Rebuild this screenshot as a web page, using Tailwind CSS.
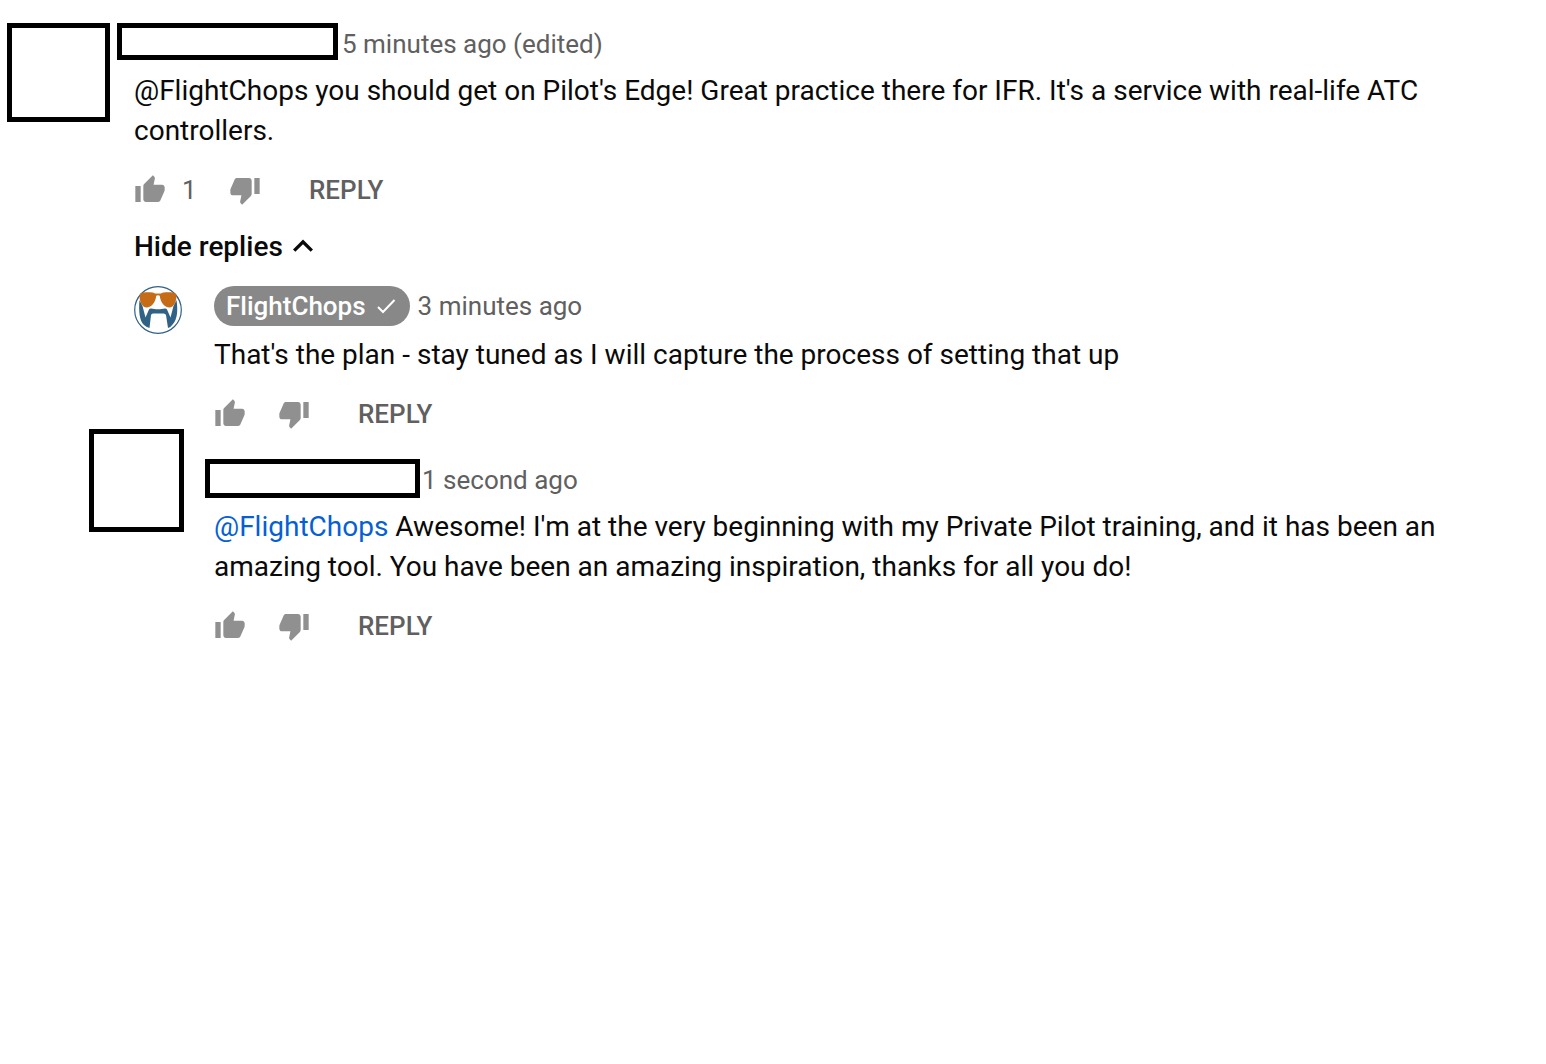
<!DOCTYPE html>
<html lang="en">
<head>
    <meta charset="UTF-8">
    <meta name="viewport" content="width=device-width, initial-scale=1.0">
    <title>Comments</title>
    <script src="https://cdn.jsdelivr.net/npm/@tailwindcss/browser@4"></script>
</head>
<body class="bg-white min-h-screen font-[Roboto,sans-serif] text-[#0a0a0a]">

    <!-- Shared icons -->
    <svg class="hidden" aria-hidden="true">
        <symbol id="icon-like" viewBox="0 0 24 24">
            <path d="M1 21h4V9H1v12zm22-11c0-1.1-.9-2-2-2h-6.31l.95-4.57.03-.32c0-.41-.17-.79-.44-1.06L14.17 1 7.59 7.59C7.22 7.95 7 8.45 7 9v10c0 1.1.9 2 2 2h9c.83 0 1.54-.5 1.84-1.22l3.02-7.05c.09-.23.14-.47.14-.73v-1.91l-.01-.01L23 10z"/>
        </symbol>
        <symbol id="icon-dislike" viewBox="0 0 24 24">
            <path d="M15 3H6c-.83 0-1.54.5-1.84 1.22l-3.02 7.05c-.09.23-.14.47-.14.73v1.91l.01.01L1 14c0 1.1.9 2 2 2h6.31l-.95 4.57-.03.32c0 .41.17.79.44 1.06L9.83 23l6.59-6.59c.36-.36.58-.86.58-1.41V5c0-1.1-.9-2-2-2zm4 0v12h4V3h-4z"/>
        </symbol>
    </svg>

    <main class="pt-[23px] pl-[7px] pr-16">
        <article class="flex items-start gap-[7px]">
            <div class="w-[103px] h-[99px] shrink-0 border-5 border-black"></div>
            <div class="min-w-0 flex-1">
                <header class="flex items-center gap-1 h-[41px]">
                    <div class="w-[221px] h-[37px] shrink-0 self-start border-5 border-black"></div>
                    <a href="#" class="text-[26px] leading-9 text-[#606060]">5 minutes ago (edited)</a>
                </header>

                <div class="pl-[17px] pt-[7px]">
                    <p class="text-[28px] leading-10">@FlightChops you should get on Pilot's Edge! Great practice there for IFR. It's a service with real-life ATC controllers.</p>

                    <div class="mt-[23px] flex items-center h-8 text-[26px] text-[#606060]">
                        <button type="button" aria-label="Like"><svg class="size-8 fill-[#909090]"><use href="#icon-like"/></svg></button>
                        <span class="ml-4 w-[15px]">1</span>
                        <button type="button" aria-label="Dislike" class="ml-8"><svg class="size-8 fill-[#909090]"><use href="#icon-dislike"/></svg></button>
                        <button type="button" class="ml-12 font-medium">REPLY</button>
                    </div>

                    <button type="button" class="mt-[21px] flex items-center h-10 text-[28px] font-medium">
                        Hide replies
                        <svg class="size-10" viewBox="0 0 24 24" fill="currentColor"><path d="M12 7.500l-6 6 1.410 1.410L12 10.330l4.590 4.580L18 13.500z"/></svg>
                    </button>

                    <section class="mt-[19px]">
                        <article class="flex items-start gap-8">
                            <svg class="size-12 shrink-0" viewBox="0 0 48 48" role="img" aria-label="FlightChops">
                                <circle cx="24" cy="24" r="23.3" fill="#fff" stroke="#2f6088" stroke-width="1.2"/>
                                <path d="M5.500 14C4.500 25 5.500 35 10 39Q12 41 15.500 42L17 29Q17.500 27.500 19 27.500H29.500Q31.500 27.500 32 29L34 42Q37 41 39 38C43.500 33 44 24 42.500 14L39.500 20 36.500 31.500 33 23.500Q32.500 22.500 31 22.500L26 23.200H22L17 22.500Q15.500 22.500 15 23.500L11.500 31.500 8.500 20Z" fill="#2f6285"/>
                                <path d="M5.800 8C8 5.500 18 5.800 22 7.300H26C30 5.800 40 5.500 42.200 8C43.500 15 39.500 21.500 35.500 21.500C30.500 21.500 26.300 16 25.800 9.800Q24 8.800 22.200 9.800C21.700 16 17.500 21.500 12.500 21.500C8.500 21.500 4.500 15 5.800 8Z" fill="#c66b16"/>
                                <path d="M20.500 7.300H27.500" fill="none" stroke="#f4d7b8" stroke-width=".8"/>
                            </svg>
                            <div class="min-w-0 flex-1">
                                <header class="flex items-center gap-2 h-10">
                                    <a href="#" class="flex items-center h-10 px-3 rounded-full bg-[#888888] text-white text-[26px] font-medium">
                                        FlightChops
                                        <svg class="ml-2 size-6" viewBox="0 0 24 24" fill="none" stroke="currentColor" stroke-width="2"><path d="M4 13l5 5L20.500 6"/></svg>
                                    </a>
                                    <a href="#" class="text-[26px] leading-9 text-[#606060]">3 minutes ago</a>
                                </header>
                                <p class="mt-[9px] text-[28px] leading-10">That's the plan - stay tuned as I will capture the process of setting that up</p>
                                <div class="mt-[23px] flex items-center h-8 text-[26px] text-[#606060]">
                                    <button type="button" aria-label="Like"><svg class="size-8 fill-[#909090]"><use href="#icon-like"/></svg></button>
                                    <button type="button" aria-label="Dislike" class="ml-8"><svg class="size-8 fill-[#909090]"><use href="#icon-dislike"/></svg></button>
                                    <button type="button" class="ml-12 font-medium">REPLY</button>
                                </div>
                            </div>
                        </article>

                        <article class="-ml-[45px] -mt-px flex items-start gap-[21px]">
                            <div class="w-[95px] h-[103px] shrink-0 border-5 border-black"></div>
                            <div class="min-w-0 flex-1 pt-[30px]">
                                <header class="flex items-center gap-0.5 h-[41px]">
                                    <div class="w-[215px] h-[39px] shrink-0 self-start border-5 border-black"></div>
                                    <a href="#" class="text-[26px] leading-9 text-[#606060]">1 second ago</a>
                                </header>
                                <div class="pl-[9px] pt-[7px]">
                                    <p class="text-[28px] leading-10"><a href="#" class="text-[#065fd4]">@FlightChops</a> Awesome! I'm at the very beginning with my Private Pilot training, and it has been an amazing tool. You have been an amazing inspiration, thanks for all you do!</p>
                                    <div class="mt-[23px] flex items-center h-8 text-[26px] text-[#606060]">
                                        <button type="button" aria-label="Like"><svg class="size-8 fill-[#909090]"><use href="#icon-like"/></svg></button>
                                        <button type="button" aria-label="Dislike" class="ml-8"><svg class="size-8 fill-[#909090]"><use href="#icon-dislike"/></svg></button>
                                        <button type="button" class="ml-12 font-medium">REPLY</button>
                                    </div>
                                </div>
                            </div>
                        </article>
                    </section>
                </div>
            </div>
        </article>
    </main>
</body>
</html>
